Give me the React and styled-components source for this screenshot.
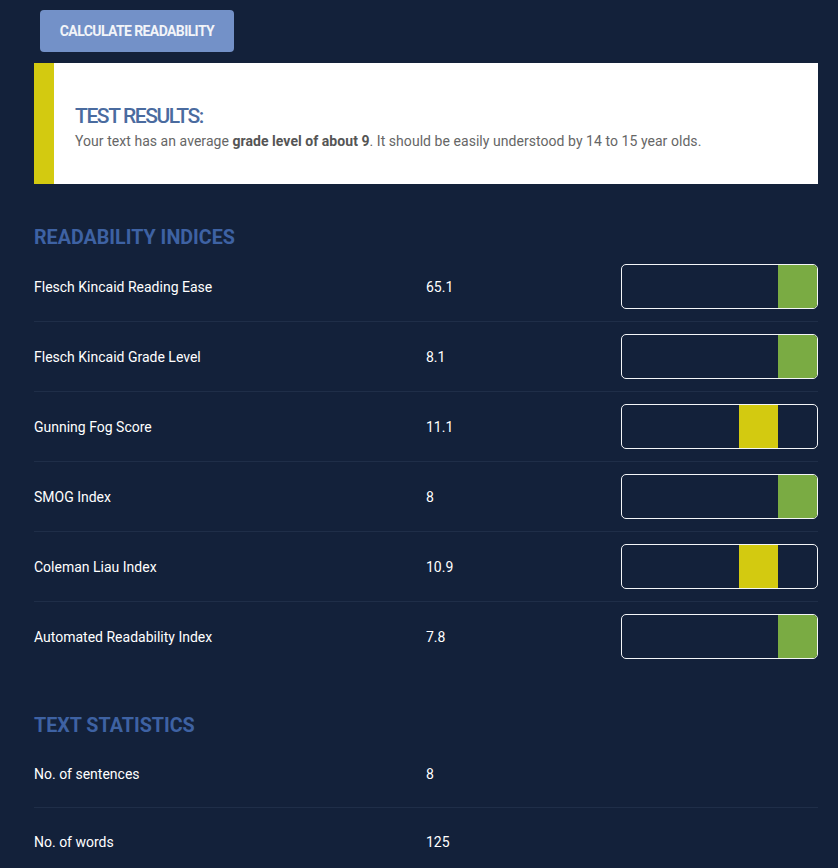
import React from 'react';
import styled, { createGlobalStyle } from 'styled-components';

const GlobalStyle = createGlobalStyle`
    html, body {
        margin: 0;
        padding: 0;
        background: #13213a;
        font-family: Roboto, 'Liberation Sans', Arial, sans-serif;
    }
`;

const indices = [
    { name: 'Flesch Kincaid Reading Ease', value: '65.1', level: 5 },
    { name: 'Flesch Kincaid Grade Level', value: '8.1', level: 5 },
    { name: 'Gunning Fog Score', value: '11.1', level: 4 },
    { name: 'SMOG Index', value: '8', level: 5 },
    { name: 'Coleman Liau Index', value: '10.9', level: 4 },
    { name: 'Automated Readability Index', value: '7.8', level: 5 },
];

const stats = [
    { name: 'No. of sentences', value: '8' },
    { name: 'No. of words', value: '125' },
];

function Meter({ level }) {
    return (
        <Bar>
            {[1, 2, 3, 4, 5].map((i) => (
                <Segment key={i} $fill={i === level ? (level === 5 ? '#7aab43' : '#d3ca10') : 'transparent'} />
            ))}
        </Bar>
    );
}

export default function App() {
    return (
        <Page>
            <GlobalStyle />
            <Button>Calculate Readability</Button>
            <Result>
                <ResultTitle>Test Results:</ResultTitle>
                <ResultText>
                    Your text has an average <b>grade level of about 9</b>. It should be easily understood by 14 to 15 year olds.
                </ResultText>
            </Result>

            <Heading>Readability Indices</Heading>
            <List>
                {indices.map((r) => (
                    <IndexRow key={r.name}>
                        <Label>{r.name}</Label>
                        <Value>{r.value}</Value>
                        <Meter level={r.level} />
                    </IndexRow>
                ))}
            </List>

            <Heading $top={44}>Text Statistics</Heading>
            <List>
                {stats.map((r) => (
                    <StatRow key={r.name}>
                        <Label>{r.name}</Label>
                        <Value>{r.value}</Value>
                    </StatRow>
                ))}
            </List>
        </Page>
    );
}

const Page = styled.div`
    width: 784px;
    margin-left: 34px;
    padding-top: 10px;
    padding-bottom: 20px;
`;
const Button = styled.button`
    display: block;
    margin-left: 6px;
    width: 194px;
    height: 42px;
    border: none;
    border-radius: 4px;
    background: #7391c8;
    color: #f2f4f8;
    font-family: Roboto, 'Liberation Sans', Arial, sans-serif;
    font-weight: 700;
    font-size: 14px;
    letter-spacing: -0.6px;
    text-transform: uppercase;
    cursor: pointer;
`;
const Result = styled.div`
    margin-top: 11px;
    height: 121px;
    box-sizing: border-box;
    background: #ffffff;
    border-left: 20px solid #d3ca10;
    padding: 41px 0 0 21px;
`;
const ResultTitle = styled.div`
    color: #4a6b9f;
    font-size: 21px;
    font-weight: 500;
    letter-spacing: -1.4px;
    line-height: 25px;
    text-transform: uppercase;
`;
const ResultText = styled.div`
    margin-top: 2px;
    color: #666666;
    font-size: 14px;
    letter-spacing: 0.05px;
    line-height: 20px;
    b {
        color: #555555;
        font-weight: 700;
    }
`;
const Heading = styled.div`
    margin-top: ${(p) => p.$top || 43}px;
    margin-bottom: 3px;
    color: #3e62a3;
    font-size: 19.7px;
    font-weight: 700;
    line-height: 22px;
    text-transform: uppercase;
`;
const List = styled.div`
    display: flex;
    flex-direction: column;
`;
const IndexRow = styled.div`
    display: grid;
    grid-template-columns: 50% 25% 25%;
    align-items: center;
    padding: 12px 0;
    border-bottom: 1px solid #1f2e48;
    &:last-child {
        border-bottom: none;
    }
`;
const StatRow = styled.div`
    display: grid;
    grid-template-columns: 50% 50%;
    align-items: center;
    padding: 24px 0 23px;
    border-bottom: 1px solid #1f2e48;
    &:last-child {
        border-bottom: none;
    }
`;
const Label = styled.div`
    color: #ffffff;
    font-size: 14px;
    line-height: 20px;
`;
const Value = styled.div`
    color: #ffffff;
    font-size: 14px;
    line-height: 20px;
`;
const Bar = styled.div`
    display: flex;
    height: 45px;
    margin-left: -1px;
    box-sizing: border-box;
    border: 1.5px solid #f4f6f8;
    border-radius: 5px;
    overflow: hidden;
`;
const Segment = styled.div`
    flex: 1;
    background: ${(p) => p.$fill};
`;
